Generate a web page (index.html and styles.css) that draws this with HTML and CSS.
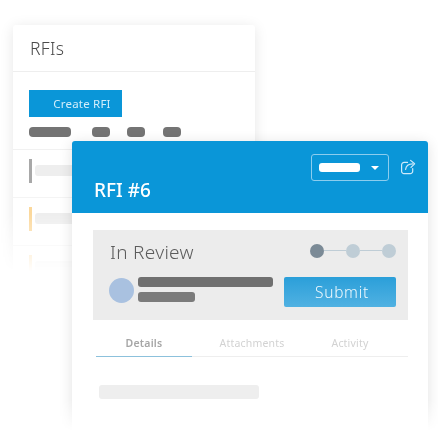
FILE: index.html
```html
<!DOCTYPE html>
<html lang="en">
<head>
  <meta charset="UTF-8" />
  <meta name="viewport" content="width=device-width, initial-scale=1.0"/>
  <title>RFIs</title>
  <link rel="stylesheet" href="styles.css">
</head>
<body>

  <!-- list window, sits behind and fades out -->
  <div class="fade fade-list">
    <section class="list-card">
      <h2 class="list-title">RFIs</h2>
      <div class="list-tools">
        <button class="create-btn">Create RFI</button>
        <div class="filters">
          <span class="pill pill-wide"></span>
          <span class="pill"></span>
          <span class="pill"></span>
          <span class="pill"></span>
        </div>
      </div>
      <div class="list-row"><span class="mark mark-grey"></span><span class="row-line"></span></div>
      <div class="list-row"><span class="mark mark-orange"></span><span class="row-line"></span></div>
      <div class="list-row"><span class="mark mark-orange"></span><span class="row-line"></span></div>
    </section>
  </div>

  <!-- detail window -->
  <div class="fade fade-detail">
    <section class="detail-card">
      <header class="detail-head">
        <div class="head-tools">
          <div class="select">
            <span class="select-value"></span>
            <span class="caret"></span>
          </div>
          <svg class="share" width="16" height="16" viewBox="0 0 16 16" fill="none" stroke="#cfeafa" stroke-width="1.2" stroke-linecap="round" stroke-linejoin="round">
            <path d="M7.5 3.4H4.2A2.6 2.6 0 0 0 1.6 6v6.2a2.4 2.4 0 0 0 2.4 2.4h6.3a2.4 2.4 0 0 0 2.4-2.4V9.6"/>
            <path d="M5.6 10.4C6 7 8.4 5 12.8 4.9"/>
            <path d="M10.6 1.4l4 3.4-3.6 3.6"/>
          </svg>
        </div>
        <h1 class="detail-title">RFI #6</h1>
      </header>

      <div class="status">
        <div class="status-top">
          <span class="status-name">In Review</span>
          <div class="steps">
            <span class="step step-on"></span>
            <span class="step-line"></span>
            <span class="step"></span>
            <span class="step-line"></span>
            <span class="step"></span>
          </div>
        </div>
        <div class="status-bottom">
          <span class="avatar"></span>
          <div class="who">
            <span class="who-name"></span>
            <span class="who-role"></span>
          </div>
          <button class="submit-btn">Submit</button>
        </div>
      </div>

      <nav class="tabs">
        <a class="tab tab-on">Details</a>
        <a class="tab">Attachments</a>
        <a class="tab">Activity</a>
      </nav>

      <div class="field"></div>
    </section>
  </div>

</body>
</html>
```

FILE: styles.css
```css
html, body {
  margin: 0;
  height: 100%;
}

body {
  position: relative;
  width: 438px;
  height: 438px;
  overflow: hidden;
  background-color: #fff;
  font-family: "Noto Sans", "Open Sans", sans-serif;
}

/* wrappers leave room for the shadow so the mask does not cut it */
.fade {
  position: absolute;
  box-sizing: border-box;
}

.fade-list {
  left: 0;
  top: 5px;
  width: 275px;
  height: 275px;
  padding: 20px 20px 0 13px;
  -webkit-mask-image: linear-gradient(#000 76%, transparent 97%);
  mask-image: linear-gradient(#000 76%, transparent 97%);
}

.fade-detail {
  left: 52px;
  top: 121px;
  width: 386px;
  height: 317px;
  padding: 20px 10px 0 20px;
  -webkit-mask-image: linear-gradient(#000 88%, transparent 98%);
  mask-image: linear-gradient(#000 88%, transparent 98%);
}

.list-card {
  height: 300px;
  background-color: #fff;
  border-radius: 3px;
  box-shadow: 0 2px 14px rgba(0, 0, 0, 0.1);
}

.list-title {
  margin: 0;
  height: 46px;
  padding-left: 17px;
  line-height: 47px;
  font-size: 17.5px;
  font-weight: 300;
  letter-spacing: 0.3px;
  color: #4a4a4a;
  border-bottom: 1px solid #eee;
}

.list-tools {
  height: 59px;
  padding: 18px 0 0 16px;
  border-bottom: 1px solid #f1f1f1;
}

.create-btn {
  display: block;
  width: 93px;
  height: 27px;
  padding: 0 0 0 13px;
  border: 0;
  background-color: #0a96d8;
  color: #d2edfa;
  font-family: inherit;
  font-size: 11.5px;
  letter-spacing: 0.2px;
}

.filters {
  display: flex;
  gap: 17.5px;
  margin-top: 10px;
}

.pill {
  width: 18px;
  height: 10px;
  border-radius: 4px;
  background-color: #747474;
}

.pill-wide {
  width: 42px;
  margin-right: 3px;
}

.list-row {
  display: flex;
  align-items: flex-start;
  gap: 3px;
  height: 38px;
  padding: 9px 0 0 16px;
  border-bottom: 1px solid #f4f4f4;
}

.mark {
  width: 3px;
  height: 24px;
}

.mark-grey {
  background-color: #a8a8a8;
}

.mark-orange {
  background-color: #fbd89c;
}

.row-line {
  width: 60px;
  height: 11px;
  margin-top: 6px;
  border-radius: 3px;
  background-color: #eee;
}

.detail-card {
  height: 290px;
  background-color: #fff;
  border-radius: 3px;
  box-shadow: 0 2px 14px rgba(0, 0, 0, 0.12);
}

.detail-head {
  box-sizing: border-box;
  height: 72px;
  padding: 13px 12px 0 22px;
  background-color: #0a96d8;
  border-radius: 3px 3px 0 0;
}

.head-tools {
  display: flex;
  justify-content: flex-end;
  align-items: center;
  gap: 11px;
}

.select {
  box-sizing: border-box;
  display: flex;
  align-items: center;
  justify-content: space-between;
  width: 78px;
  height: 27px;
  padding: 0 8px 0 7px;
  border: 1px solid #8ccdee;
  border-radius: 3px;
}

.select-value {
  width: 41px;
  height: 9px;
  border-radius: 3px;
  background-color: #fff;
}

.caret {
  margin-right: 1px;
  border-top: 4px solid #fff;
  border-left: 4px solid transparent;
  border-right: 4px solid transparent;
}

.share {
  display: block;
  margin-top: -2px;
}

.detail-title {
  margin: -4px 0 0;
  font-size: 19px;
  font-weight: 500;
  line-height: 26px;
  color: #fff;
}

.status {
  box-sizing: border-box;
  height: 90px;
  margin: 17px 20px 0 21px;
  padding: 10px 12px 0 16px;
  background-color: #ececec;
}

.status-top {
  display: flex;
  justify-content: space-between;
  align-items: center;
  height: 26px;
}

.status-name {
  margin: 0 0 2px 1px;
  font-size: 19px;
  font-weight: 300;
  letter-spacing: 0.3px;
  color: #5c5c5c;
}

.steps {
  display: flex;
  align-items: center;
  margin-top: -5px;
}

.step {
  width: 14px;
  height: 14px;
  border-radius: 50%;
  background-color: #bfcdd6;
}

.step-on {
  background-color: #7b8a96;
}

.step-line {
  width: 22px;
  height: 1px;
  background-color: #bfcdd6;
}

.status-bottom {
  display: flex;
  align-items: flex-start;
  margin-top: 11px;
}

.avatar {
  width: 25px;
  height: 25px;
  margin: 1px 4px 0 0;
  border-radius: 50%;
  background-color: #a9c1e0;
}

.who {
  display: flex;
  flex-direction: column;
  gap: 5px;
  width: 146px;
}

.who-name {
  width: 135px;
  height: 10px;
  border-radius: 3px;
  background-color: #707070;
}

.who-role {
  width: 57px;
  height: 10px;
  border-radius: 3px;
  background-color: #7b7b7b;
}

.submit-btn {
  width: 112px;
  height: 30px;
  padding: 0 0 0 4px;
  border: 0;
  border-radius: 2px;
  background: linear-gradient(#2b9fd9, #50b1e2);
  color: #eef8fd;
  font-family: inherit;
  font-size: 15.5px;
  font-weight: 300;
  letter-spacing: 0.7px;
}

.tabs {
  display: grid;
  grid-template-columns: 96px 120px 76px;
  margin: 11px 20px 0 24px;
  height: 25px;
  border-bottom: 1px solid #eee;
}

.tab {
  text-align: center;
  line-height: 24px;
  font-size: 10.5px;
  letter-spacing: 0.2px;
  color: #d2d2d2;
}

.tab-on {
  height: 25px;
  border-bottom: 1px solid #8cc1dc;
  font-weight: 600;
  color: #a6a6a6;
}

.field {
  width: 160px;
  height: 14px;
  margin: 28px 0 0 27px;
  border-radius: 3px;
  background-color: #eee;
}
```
